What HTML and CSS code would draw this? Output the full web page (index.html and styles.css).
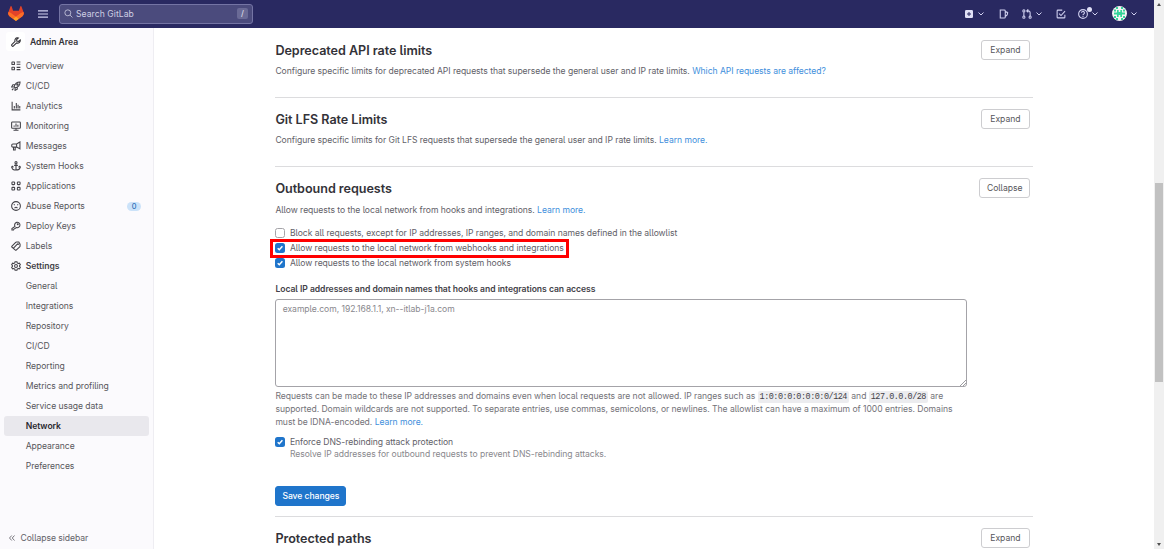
FILE: index.html
```html
<!DOCTYPE html>
<html lang="en">
<head>
<meta charset="utf-8">
<title>Network · Settings · Admin Area</title>
<link rel="stylesheet" href="styles.css">
</head>
<body>
<div class="app">
  <header class="navbar">
    <svg class="logo" viewBox="0 0 25 24"><path fill="#E24329" d="m24.5 9.5-.03-.09L21.080.56a.9.9 0 0 0-1.7.09l-2.29 7H7.83l-2.29-7A.9.9 0 0 0 3.84.56L.45 9.4l-.03.1a6.3 6.3 0 0 0 2.09 7.27L12.46 24l9.95-7.23A6.3 6.3 0 0 0 24.5 9.5z"/><path fill="#FC6D26" d="m24.5 9.5-.03-.09a11.4 11.4 0 0 0-4.56 2.05l-7.450 5.640L22.410 16.770A6.300 6.300 0 0 0 24.500 9.500z"/><path fill="#FC6D26" d="M5.010 11.460A11.400 11.400 0 0 0 .450 9.400a6.300 6.300 0 0 0 2.060 7.370l5.190 3.800 4.760-3.500zM19.900 11.460l-7.440 5.600 4.760 3.510 5.190-3.800z"/><path fill="#FCA326" d="m7.7 20.570 4.760 3.430 4.760-3.430-4.760-3.600z"/></svg>
    <svg class="ico burger" viewBox="0 0 16 16"><path d="M0 3h16M0 8h16M0 13h16"/></svg>
    <div class="search">
      <svg class="ico" viewBox="0 0 16 16"><circle cx="6.800" cy="6.800" r="5.300"/><path d="m10.800 10.800 4.200 4.200"/></svg>
      <span class="search-text">Search GitLab</span>
      <kbd>/</kbd>
    </div>
    <div class="tools">
      <span class="tool new"><svg class="ico" viewBox="0 0 16 16"><rect class="solid" x="0" y="0" width="16" height="16" rx="2.500"/><path class="dark" d="M8 4v8M4 8h8"/></svg><svg class="chev" viewBox="0 0 8 8"><path d="m1.500 2.500 2.500 2.500 2.500-2.500"/></svg></span>
      <span class="tool issues"><svg class="ico" viewBox="0 0 16 16"><path d="M2 1.500h6.500a1.500 1.500 0 0 1 1.500 1.500v10a1.500 1.500 0 0 1-1.500 1.500H2zM10 4l3.300 1.100a1 1 0 0 1 .6 1.200L13 9.500 10 12"/></svg></span>
      <span class="tool merge"><svg class="ico" viewBox="0 0 16 16"><circle cx="3" cy="3" r="1.700"/><circle cx="3" cy="13" r="1.700"/><circle cx="13" cy="13" r="1.700"/><path d="M3 5v6M13 11V6a3 3 0 0 0-3-3H8M10 .5 7.500 3 10 5.500"/></svg><svg class="chev" viewBox="0 0 8 8"><path d="m1.500 2.500 2.500 2.500 2.500-2.500"/></svg></span>
      <span class="tool todo"><svg class="ico" viewBox="0 0 16 16"><path d="M10 1.800H3A1.200 1.200 0 0 0 1.800 3v10A1.200 1.200 0 0 0 3 14.200h10a1.200 1.200 0 0 0 1.200-1.200V9M5 7.500l3 3 6.500-7"/></svg></span>
      <span class="tool help"><svg class="ico" viewBox="0 0 16 16"><circle cx="8" cy="8" r="7"/><path d="M5.700 6.200A2.300 2.300 0 1 1 8.800 8.300Q8 8.700 8 9.800M8 11.300v1.500"/></svg><i class="dot"></i><svg class="chev" viewBox="0 0 8 8"><path d="m1.500 2.500 2.500 2.500 2.500-2.500"/></svg></span>
      <span class="tool user"><svg class="avatar" viewBox="0 0 15 15"><circle cx="7.500" cy="7.500" r="7.500" fill="#f4f4f4"/><path fill="#35d39a" d="M4 1h2v2H4zM9 1h2v2H9zM2 3.500h2v2H2zM11 3.500h2v2h-2zM5 4h1.700v2h1.600V4H10v2.500h3v2h-3V11H8.300V9H6.700v2H5V8.500H2v-2h3zM2 10h2v2H2zM11 10h2v2h-2zM4 12h2v2H4zM9 12h2v2H9z"/></svg><svg class="chev" viewBox="0 0 8 8"><path d="m1.500 2.500 2.500 2.500 2.500-2.500"/></svg></span>
    </div>
  </header>

  <div class="body">
    <aside class="sidebar">
      <div class="context"><span class="context-icon"><svg class="ico" viewBox="0 0 16 16"><path d="M9.500 1.300a4.300 4.300 0 0 0-3 5.700L1.600 11.900a1.600 1.600 0 0 0 2.400 2.400L9 9.500a4.300 4.300 0 0 0 5.800-4.800L12 7 9.200 6.600 9 4l2.800-2.500a4 4 0 0 0-2.300-.2z"/></svg></span>Admin Area</div>
      <nav class="menu">
        <a><svg class="ico" viewBox="0 0 16 16"><rect x="1.500" y="1.500" width="4" height="4" rx=".5"/><rect x="1.500" y="10" width="4" height="4" rx=".5"/><path d="M9 1.700h6M9 5.300h6M9 10.200h6M9 13.800h6"/></svg>Overview</a>
        <a><svg class="ico" viewBox="0 0 16 16"><path d="M5 9.500C6 5 9 1.500 14.500 1.500 14.500 7 11 10 6.500 11zM6 6H3L1 9.500l4 0M10 10v3l-3.500 2v-4M1.500 14.500l2.500-2.500"/><circle cx="10.300" cy="5.700" r="1.100"/></svg>CI/CD</a>
        <a><svg class="ico" viewBox="0 0 16 16"><path d="M1.800 1v13.200H15M5.300 8v4M8.500 3v9M11.300 6v6M14 8v4"/></svg>Analytics</a>
        <a><svg class="ico" viewBox="0 0 16 16"><rect x="1" y="1.500" width="14" height="10" rx="1.200"/><path d="M5 7v2M8 4v5M11 6v3M8 11.500v3M4 14.700h8"/></svg>Monitoring</a>
        <a><svg class="ico" viewBox="0 0 16 16"><path d="M14.300 1.500v11L9 9.800H3A1.800 1.800 0 0 1 1.200 8V6.500A1.800 1.800 0 0 1 3 4.700h6zM9 4.700v5M4 10v4.300h2.700V10"/></svg>Messages</a>
        <a><svg class="ico" viewBox="0 0 16 16"><circle cx="8" cy="2.700" r="1.700"/><path d="M8 4.500v10M5 7h6M1.500 9v1.500C2 13 5 14.400 8 14.400s6-1.400 6.500-3.900V9M.5 10.500l1.500-2 2 1.500M12 10l2-1.500 1.500 2"/></svg>System Hooks</a>
        <a><svg class="ico" viewBox="0 0 16 16"><rect x="1.500" y="1.500" width="4.300" height="4.300" rx="1"/><rect x="10.200" y="1.500" width="4.300" height="4.300" rx="1"/><rect x="1.500" y="10.200" width="4.300" height="4.300" rx="1"/><rect x="10.200" y="10.200" width="4.300" height="4.300" rx="1"/></svg>Applications</a>
        <a><svg class="ico" viewBox="0 0 16 16"><circle cx="8" cy="8" r="7"/><path d="M4.500 5.300 6 6.500M11.500 5.300 10 6.500M5.700 11.500Q8 8.700 10.300 11.500"/></svg>Abuse Reports<span class="count">0</span></a>
        <a><svg class="ico" viewBox="0 0 16 16"><path d="M6.300 8.500a4.300 4.300 0 1 1 2.500 2L7.500 11l-1 1-1.500.5-1 2H1.500V12z"/><circle cx="10.800" cy="5.200" r=".7"/></svg>Deploy Keys</a>
        <a><svg class="ico" viewBox="0 0 16 16"><path d="M1.200 8.500 7.500 2.200A2 2 0 0 1 9 1.600h3.500L14.500 5v3a2 2 0 0 1-.6 1.400L8.700 14.300a1.500 1.500 0 0 1-2.100 0L1.200 9.500zM4 11.500l6.500-7"/><circle cx="11.200" cy="5" r=".6"/></svg>Labels</a>
        <a class="open"><svg class="ico" viewBox="0 0 16 16"><path d="M6.500 1.200h3l.5 2 1.500.8 2-.6 1.500 2.600L13.600 7.500v1l1.400 1.500-1.500 2.600-2-.6-1.500.8-.5 2h-3l-.5-2L4.500 12l-2 .6L1 10l1.400-1.500v-1L1 6l1.500-2.600 2 .6L6 3.200z"/><circle cx="8" cy="8" r="2.300"/></svg>Settings</a>
        <a class="sub">General</a>
        <a class="sub">Integrations</a>
        <a class="sub">Repository</a>
        <a class="sub">CI/CD</a>
        <a class="sub">Reporting</a>
        <a class="sub">Metrics and profiling</a>
        <a class="sub">Service usage data</a>
        <a class="sub active">Network</a>
        <a class="sub">Appearance</a>
        <a class="sub">Preferences</a>
      </nav>
      <div class="collapse"><svg class="ico" viewBox="0 0 16 16"><path d="M7.500 3 3 8l4.500 5M13 3 8.500 8l4.500 5"/></svg>Collapse sidebar</div>
    </aside>

    <main class="content">
      <section class="panel">
        <div class="panel-head"><h4>Deprecated API rate limits</h4><button class="btn">Expand</button></div>
        <p class="desc">Configure specific limits for deprecated API requests that supersede the general user and IP rate limits. <a>Which API requests are affected?</a></p>
      </section>
      <section class="panel">
        <div class="panel-head"><h4>Git LFS Rate Limits</h4><button class="btn">Expand</button></div>
        <p class="desc">Configure specific limits for Git LFS requests that supersede the general user and IP rate limits. <a>Learn more.</a></p>
      </section>
      <section class="panel expanded">
        <div class="panel-head"><h4>Outbound requests</h4><button class="btn">Collapse</button></div>
        <p class="desc">Allow requests to the local network from hooks and integrations. <a>Learn more.</a></p>
        <div class="checks">
          <div class="check"><span class="box"></span><span>Block all requests, except for IP addresses, IP ranges, and domain names defined in the allowlist</span></div>
          <div class="check marked"><span class="box on"><svg viewBox="0 0 10 10"><path d="M2.700 5.200 4.300 6.700 7.400 3.300"/></svg></span><span>Allow requests to the local network from webhooks and integrations</span></div>
          <div class="check"><span class="box on"><svg viewBox="0 0 10 10"><path d="M2.700 5.200 4.300 6.700 7.400 3.300"/></svg></span><span>Allow requests to the local network from system hooks</span></div>
        </div>
        <div class="label">Local IP addresses and domain names that hooks and integrations can access</div>
        <div class="textarea">example.com, 192.168.1.1, xn--itlab-j1a.com<svg class="grip" viewBox="0 0 6 6"><path d="M0 6 6 0M3 6l3-3"/></svg></div>
        <p class="help-text"><span>Requests can be made to these IP addresses and domains even when local requests are not allowed. IP ranges such as <code>1:0:0:0:0:0:0:0/124</code> and <code>127.0.0.0/28</code> are</span><br><span>supported. Domain wildcards are not supported. To separate entries, use commas, semicolons, or newlines. The allowlist can have a maximum of 1000 entries. Domains</span><br><span>must be IDNA-encoded. <a>Learn more.</a></span></p>
        <div class="check dns"><span class="box on"><svg viewBox="0 0 10 10"><path d="M2.700 5.200 4.300 6.700 7.400 3.300"/></svg></span><span>Enforce DNS-rebinding attack protection</span></div>
        <div class="check-help">Resolve IP addresses for outbound requests to prevent DNS-rebinding attacks.</div>
        <button class="btn primary">Save changes</button>
      </section>
      <section class="panel last">
        <div class="panel-head"><h4>Protected paths</h4><button class="btn">Expand</button></div>
      </section>
    </main>
  </div>
</div>
<div class="scrollbar"><span class="arrow up"></span><span class="thumb"></span><span class="arrow down"></span></div>
</body>
</html>
```
FILE: styles.css
```css
*, *::after { box-sizing: border-box; }
body {
  margin: 0;
  width: 1164px;
  height: 549px;
  overflow: hidden;
  display: flex;
  background: #fff;
  color: #626168;
  font-family: Inter, "Liberation Sans", sans-serif;
  font-size: 8.6px;
  letter-spacing: -.045px;
  font-feature-settings: "cv05";
  white-space: nowrap;
}
svg { display: block; flex: none; fill: none; }
.ico { width: 10px; height: 10px; stroke: currentColor; stroke-width: 1.7; }
.app { width: 1154px; height: 549px; display: flex; flex-direction: column; overflow: hidden; }

.navbar { height: 28px; flex: none; background: #292961; color: #d1d1f0; display: flex; align-items: center; padding: 0 16px 1px 8px; }
.logo { width: 16px; height: 15px; }
.burger { margin-left: 14px; }
.search { margin-left: 11px; width: 194px; height: 20px; border: 1px solid #7474a4; border-radius: 3px; background: #4b4b7d; display: flex; align-items: center; padding: 0 4px; color: #d0d0e4; }
.search .ico { width: 9px; height: 9px; stroke-width: 1.4; }
.search-text { margin-left: 3px; letter-spacing: .05px; }
kbd { margin-left: auto; width: 11px; height: 11px; border-radius: 2px; background: #6a6a96; font: 8px/11px Inter, sans-serif; text-align: center; color: #e4e4f4; }
.tools { margin-left: auto; display: flex; align-items: center; }
.tool { display: flex; align-items: center; position: relative; }
.tool .ico { stroke-width: 1.7; }
.new .ico { width: 8px; height: 8px; }
.solid { fill: #e0e0f6; stroke: none; }
.dark { stroke: #292961; stroke-width: 2; }
.chev { width: 8px; height: 8px; margin-left: 4px; stroke: #d1d1f0; stroke-width: 1; }
.issues { margin-left: 13.500px; }
.merge { margin-left: 13px; }
.merge .chev { margin-left: 3px; }
.todo { margin-left: 13px; }
.help { margin-left: 12.500px; }
.dot { position: absolute; left: 9px; top: -2px; width: 5px; height: 5px; border-radius: 50%; background: #e0e0f6; }
.user { margin-left: 12px; }
.user .chev { margin-left: 3px; }
.help .chev { margin-left: 3px; margin-right: 1px; }
.avatar { width: 15px; height: 15px; }

.body { flex: 1; min-height: 0; display: flex; }
.sidebar { width: 154px; flex: none; background: #fbfafd; border-right: 1px solid #eeedf2; display: flex; flex-direction: column; padding: 4px 4px 1.500px; }
.context { height: 19px; display: flex; align-items: center; color: #333238; font-weight: 600; padding-left: 2px; }
.context-icon { width: 19px; height: 19px; margin-right: 5px; background: #fff; border-radius: 3px; display: flex; align-items: center; justify-content: center; }
.menu { margin-top: 5px; display: flex; flex-direction: column; }
.menu a { height: 20px; display: flex; align-items: center; padding: 0 8px 0 7px; color: #57565b; }
.menu .ico { margin-right: 4.700px; color: #434248; }
.menu .sub { padding-left: 21.700px; }
.menu .open { font-weight: 600; color: #434248; }
.menu .active { font-weight: 600; color: #28272d; background: #e9e8ed; border-radius: 3px; }
.count { margin-left: auto; width: 14px; height: 9px; border-radius: 5px; background: #cbe2f9; color: #0b5cad; font-size: 7.500px; line-height: 9px; text-align: center; }
.collapse { margin-top: auto; height: 20px; display: flex; align-items: center; padding-left: 4px; }
.collapse .ico { width: 8px; height: 8px; margin-right: 4.500px; }

.content { width: 758px; margin-left: 121.400px; padding-top: 1px; }
.panel { height: 69px; padding-top: 11px; border-bottom: 1px solid #dcdcde; }
.panel-head { height: 20px; display: flex; align-items: center; justify-content: space-between; padding-right: 3.500px; }
h4 { margin: 0; padding-top: 2px; font-size: 12.600px; line-height: 20px; font-weight: 600; color: #333238; }
.btn { height: 20px; min-width: 49px; margin: 0; padding: 0 6.500px; border: 1px solid #cdcdd0; border-radius: 3px; background: #fff; color: #57565b; font: inherit; letter-spacing: inherit; line-height: 18px; }
p { margin: 0; }
.desc { margin-top: 5px; line-height: 13px; }
a { color: #428fdc; }
.expanded { height: 350px; }
.expanded .desc { margin-top: 6px; }
.checks { margin-top: 9px; }
.check { height: 14.700px; display: flex; align-items: center; position: relative; }
.box { width: 10px; height: 10px; margin-right: 4.500px; border: 1px solid #a4a3a8; border-radius: 2.500px; background: #fff; }
.box.on { background: #1f75cb; border: 0; }
.box svg { width: 10px; height: 10px; stroke: #fff; stroke-width: 1.500; }
.marked::after { content: ""; position: absolute; left: -5.400px; top: -2px; width: 299px; height: 19px; border: 3px solid #f00; }
.label { margin-top: 13px; line-height: 13px; font-weight: 600; color: #434248; }
.textarea { position: relative; margin-top: 3px; width: 692px; height: 88px; border: 1px solid #a4a3a8; border-radius: 3px; padding: 3px 6.300px; line-height: 13px; color: #89888d; }
.grip { position: absolute; right: 0; bottom: 0; width: 6px; height: 6px; stroke: #737278; stroke-width: .7; }
.help-text { margin-top: 3px; line-height: 12.800px; color: #737278; }
code { font: 8.500px/11px "Liberation Mono", monospace; letter-spacing: -.5px; color: #434248; background: #ececef; border-radius: 2px; padding: 1px 2px; }
.dns { margin-top: 5.500px; }
.check-help { margin-left: 14.500px; line-height: 11px; color: #89888d; }
.primary { display: block; margin-top: 26px; padding: 0 6px; background: #1f75cb; border-color: #1f75cb; color: #fff; font-weight: 500; }
.last { border: 0; }

.scrollbar { width: 10px; height: 549px; background: #f0f0f0; position: relative; display: flex; flex-direction: column; align-items: center; justify-content: space-between; padding: 3px 0; }
.thumb { position: absolute; left: 1px; top: 183px; width: 8px; height: 199px; background: #c1c1c1; }
.arrow { border: 2.500px solid transparent; }
.up { border-top: 0; border-bottom: 3px solid #505050; }
.down { border-bottom: 0; border-top: 3px solid #505050; }
```
